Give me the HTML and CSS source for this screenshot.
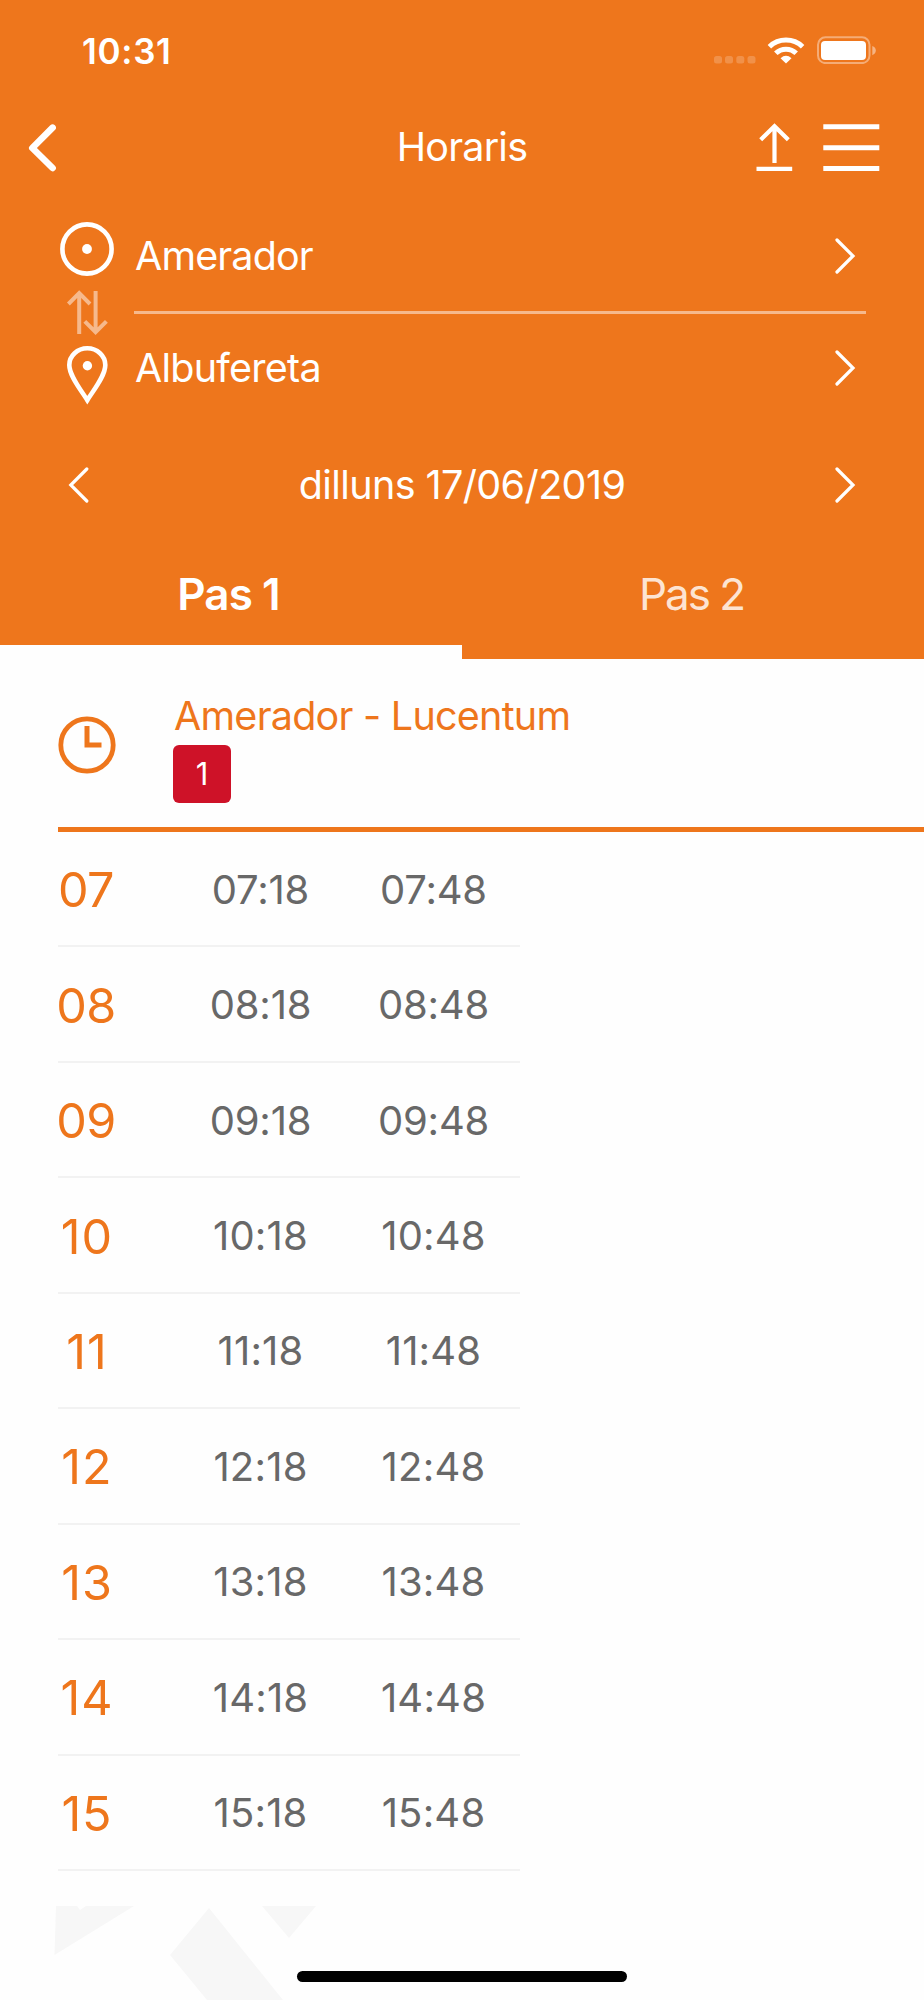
FILE: index.html
```html
<!DOCTYPE html>
<html lang="ca">
<head>
<meta charset="utf-8">
<title>Horaris</title>
<link rel="stylesheet" href="styles.css">
</head>
<body>
<div class="screen">
  <header class="header">
    <div class="status">
      <span class="clock">10:31</span>
      <svg class="status-icons" width="164" height="28" viewBox="713 36 164 28">
        <g fill="#fff" fill-opacity=".2"><rect x="714" y="56" width="8" height="7.5" rx="2.5"/><rect x="725" y="56" width="8" height="7.5" rx="2.5"/><rect x="736.3" y="56" width="8" height="7.5" rx="2.5"/><rect x="747.5" y="56" width="8" height="7.5" rx="2.5"/></g>
        <g fill="none" stroke="#fff" stroke-width="5"><path d="M769.4 46.7a24 24 0 0 1 33.2 0"/><path d="M775.8 53.3a14.6 14.6 0 0 1 20.4 0"/></g>
        <path d="M780.5 58.2q5.5-4.8 11 0L786 63.4z" fill="#fff"/>
        <rect x="818" y="37.3" width="51.5" height="25.8" rx="7.5" fill="none" stroke="#fff" stroke-opacity=".4" stroke-width="2"/>
        <rect x="821" y="41" width="45" height="19" rx="4" fill="#fff"/>
        <path d="M872.3 46q3.5 1.2 3.5 4.6t-3.5 4.6z" fill="#fff" fill-opacity=".45"/>
      </svg>
    </div>
    <nav class="nav">
      <svg class="nav-back" width="30" height="50" viewBox="28 123 30 50"><path d="M52.6 127.7 32.3 148 52.6 168" fill="none" stroke="#fff" stroke-width="6.6" stroke-linecap="round" stroke-linejoin="round"/></svg>
      <h1 class="title">Horaris</h1>
      <svg class="nav-actions" width="124" height="50" viewBox="756 123 124 50" fill="none" stroke="#fff">
        <path d="M774.5 163V126.5M760.7 139.7l13.8-13.5 13.8 13.5" stroke-width="4.2"/>
        <path d="M756.5 168.8h35.7" stroke-width="4.2"/>
        <path d="M823.3 126.8h56M823.3 147.7h56M823.3 168.6h56" stroke-width="5"/>
      </svg>
    </nav>
    <section class="route">
      <svg class="route-icons" width="56" height="190" viewBox="59 218 56 190" fill="none">
        <circle cx="87" cy="249" r="24.6" stroke="#fff" stroke-width="4.6"/>
        <circle cx="87" cy="249" r="4.9" fill="#fff"/>
        <g stroke="#f6b98c" stroke-width="4"><path d="M79.2 334v-40M68.4 304l10.8-10.8L90 304"/><path d="M95.6 291v40M84.8 321.3l10.8 10.8 10.8-10.8"/></g>
        <path d="M87.3 400.2C81 390 69.3 376 69.3 365a18 16.7 0 0 1 36 0C105.3 376 93.6 390 87.3 400.2z" stroke="#fff" stroke-width="4.6"/>
        <circle cx="87.4" cy="365.7" r="4.7" fill="#fff"/>
      </svg>
      <div class="stops">
        <div class="stop"><span class="stop-name">Amerador</span><svg class="chevron" width="22" height="38" viewBox="0 0 22 38"><path d="M2 3 18 19 2 35"/></svg></div>
        <div class="stop"><span class="stop-name">Albufereta</span><svg class="chevron" width="22" height="38" viewBox="0 0 22 38"><path d="M2 3 18 19 2 35"/></svg></div>
      </div>
    </section>
    <div class="date">
      <svg class="chevron" width="22" height="38" viewBox="0 0 22 38"><path d="M19.8 3 3.8 19 19.8 35"/></svg>
      <span class="date-text">dilluns 17/06/2019</span>
      <svg class="chevron" width="22" height="38" viewBox="0 0 22 38"><path d="M2 3 18 19 2 35"/></svg>
    </div>
    <div class="tabs"><div class="tab active"><span>Pas 1</span></div><div class="tab"><span>Pas 2</span></div></div>
  </header>
  <main class="main">
    <div class="line-head">
      <svg width="58" height="58" viewBox="0 0 58 58" fill="none" stroke="#ee761c"><circle cx="29" cy="29" r="26.2" stroke-width="4.8"/><path d="M29 10v19h14.5" stroke-width="5"/></svg>
      <div class="line-info"><h2 class="line-name">Amerador - Lucentum</h2><span class="badge">1</span></div>
    </div>
    <div class="rows">
      <div class="row"><b>07</b><span>07:18</span><span>07:48</span></div>
      <div class="row"><b>08</b><span>08:18</span><span>08:48</span></div>
      <div class="row"><b>09</b><span>09:18</span><span>09:48</span></div>
      <div class="row teen"><b>10</b><span>10:18</span><span>10:48</span></div>
      <div class="row teen"><b>11</b><span>11:18</span><span>11:48</span></div>
      <div class="row teen"><b>12</b><span>12:18</span><span>12:48</span></div>
      <div class="row teen"><b>13</b><span>13:18</span><span>13:48</span></div>
      <div class="row teen"><b>14</b><span>14:18</span><span>14:48</span></div>
      <div class="row teen"><b>15</b><span>15:18</span><span>15:48</span></div>
    </div>
  </main>
  <footer class="footer">
    <svg class="watermark" width="924" height="94" viewBox="0 1906 924 94" fill="#f7f7f7"><path d="M56 1906h21l3 4 6-4h48L54.5 1955zM262 1906h54l-27 32zM209 1908 283 2000h-76l-37-45z"/></svg>
    <div class="home"></div>
  </footer>
</div>
</body>
</html>
```
FILE: styles.css
```css
* { box-sizing: border-box; }
body { margin: 0; background: #fefefe; font-family: Inter, "Liberation Sans", sans-serif; }
svg { display: block; flex: none; }
h1, h2 { margin: 0; font-weight: 400; }
.screen { width: 924px; height: 2000px; overflow: hidden; display: flex; flex-direction: column; }
.header { height: 659px; flex: none; background: #ee761c; color: #fff; display: flex; flex-direction: column; }

.status { height: 100px; padding: 0 47px 0 82px; display: flex; justify-content: space-between; align-items: center; }
.clock { font-size: 35px; font-weight: 600; letter-spacing: .7px; line-height: 40px; padding-top: 2px; }

.nav { height: 96px; display: grid; grid-template-columns: 140px 1fr 124px; align-items: center; padding: 0 44px 0 28px; }
.title { font-size: 39.5px; line-height: 46px; letter-spacing: -.8px; text-align: center; padding-bottom: 2px; }

.route { height: 229px; display: flex; padding: 0 58px 0 59px; }
.route-icons { margin-top: 22px; }
.stops { flex: 1; margin-left: 19px; padding-top: 4px; }
.stop { height: 110px; display: flex; justify-content: space-between; align-items: center; padding: 0 9px 0 1px; }
.stop:first-child { height: 114px; border-bottom: 3px solid #f6b98c; }
.stop:last-child { padding-bottom: 3px; }
.stop-name { font-size: 39.5px; line-height: 48px; letter-spacing: -.85px; }
.stop:last-child .stop-name { letter-spacing: -.75px; }
.chevron { fill: none; stroke: #fff; stroke-width: 3.2; stroke-linecap: round; }

.date { height: 121px; padding: 0 67px 2px; display: flex; align-items: center; justify-content: space-between; }
.date-text { font-size: 39.5px; line-height: 48px; letter-spacing: -.6px; }

.tabs { flex: 1; display: flex; }
.tab { width: 462px; height: 113px; padding: 20px 3px 0 0; font-size: 44px; line-height: 56px; text-align: center; color: #fde4d2; letter-spacing: -2px; }
.tab.active { color: #fff; font-weight: 600; letter-spacing: -.9px; padding-right: 5px; border-bottom: 14px solid #fefefe; }

.main { height: 1213px; flex: none; padding-left: 58px; }
.line-head { height: 173px; display: flex; border-bottom: 5px solid #ee761c; padding-top: 33px; }
.line-head > svg { margin-top: 24px; }
.line-info { margin-left: 57px; }
.line-name { font-size: 39.5px; line-height: 48px; letter-spacing: -.75px; padding-left: 1px; color: #ee761c; white-space: nowrap; }
.badge { display: block; width: 58px; height: 58px; margin-top: 5px; border-radius: 6px; background: #ce1228; color: #fff; font-size: 31px; line-height: 58px; text-align: center; }

.rows { width: 462px; }
.row { height: 115.45px; display: grid; grid-template-columns: 56px 60px 173px 173px; align-items: center; border-bottom: 2px solid #f2f2f2; color: #686868; font-size: 40px; padding-top: 1px; }
.row b { font-weight: 400; font-size: 48.5px; line-height: 60px; padding-top: 2px; color: #ee761c; justify-self: center; letter-spacing: -.5px; }
.row span { text-align: center; letter-spacing: -.2px; }
.row span:nth-child(2) { grid-column: 3; }
.teen b { letter-spacing: 1px; padding-left: 2px; }
.teen span { letter-spacing: .2px; }

.footer { flex: 1; display: grid; align-items: end; justify-items: center; }
.footer > * { grid-area: 1 / 1; }
.home { width: 330px; height: 11px; margin-bottom: 18px; border-radius: 6px; background: #000; }
```
